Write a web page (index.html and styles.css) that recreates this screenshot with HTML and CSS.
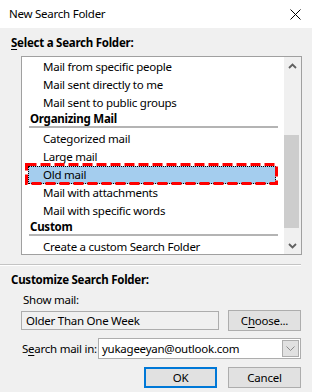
FILE: index.html
```html
<!DOCTYPE html>
<html lang="en">
<head>
    <meta charset="UTF-8">
    <title>New Search Folder</title>
    <link rel="stylesheet" href="styles.css">
</head>
<body>
    <div class="dialog">
        <div class="titlebar">
            <span class="title">New Search Folder</span>
            <svg class="close" width="11" height="11" viewBox="0 0 11 11"><path d="M0.5 0.5 L10.5 10.5 M10.5 0.5 L0.5 10.5" stroke="#000" stroke-width="1" fill="none"/></svg>
        </div>

        <div class="content">
            <div class="section-label"><u>S</u>elect a Search Folder:</div>

            <div class="listbox">
                <ul class="list">
                    <li class="item">Mail from specific people</li>
                    <li class="item">Mail sent directly to me</li>
                    <li class="item">Mail sent to public groups</li>
                    <li class="group">Organizing Mail</li>
                    <li class="item">Categorized mail</li>
                    <li class="item">Large mail</li>
                    <li class="item selected">Old mail
                        <svg class="mark" width="253" height="22" viewBox="0 0 253 22"><rect x="1.5" y="1.5" width="250" height="19" fill="none" stroke="#f00" stroke-width="3" stroke-dasharray="10 4"/></svg>
                    </li>
                    <li class="item">Mail with attachments</li>
                    <li class="item">Mail with specific words</li>
                    <li class="group">Custom</li>
                    <li class="item">Create a custom Search Folder</li>
                </ul>
                <div class="scrollbar">
                    <div class="arrow"><svg width="9" height="6" viewBox="0 0 9 6"><path d="M1 5 L4.5 1.5 L8 5" stroke="#606060" stroke-width="1.8" fill="none"/></svg></div>
                    <div class="track"><div class="thumb"></div></div>
                    <div class="arrow"><svg width="9" height="6" viewBox="0 0 9 6"><path d="M1 1 L4.5 4.5 L8 1" stroke="#606060" stroke-width="1.8" fill="none"/></svg></div>
                </div>
            </div>

            <div class="divider"></div>

            <div class="section-label customize">Customize Search Folder:</div>
            <div class="field-label">Show mail:</div>
            <div class="show-row">
                <div class="textbox">Older Than One Week</div>
                <button type="button" class="btn">C<u>h</u>oose...</button>
            </div>

            <div class="search-row">
                <span class="field-label inline">S<u>e</u>arch mail in:</span>
                <div class="combo">
                    <span class="combo-value">yukageeyan@outlook.com</span>
                    <span class="combo-drop"><svg width="9" height="5" viewBox="0 0 9 5"><path d="M0.5 0.5 L4.5 4.5 L8.5 0.5" stroke="#8a8a8a" stroke-width="1" fill="none"/></svg></span>
                </div>
            </div>

            <div class="button-group">
                <button type="button" class="btn default">OK</button>
                <button type="button" class="btn">Cancel</button>
            </div>
        </div>
    </div>
</body>
</html>
```

FILE: styles.css
```css
body {
    margin: 0;
    background-color: #f0f0f0;
    font-family: 'Noto Sans', 'Open Sans', sans-serif;
    font-size: 11.5px;
    letter-spacing: -0.25px;
    color: #000;
}

.dialog { width: 312px; height: 392px; overflow: hidden; }

.titlebar {
    height: 28px; background-color: #fff;
    display: flex; align-items: center; justify-content: space-between;
    padding: 0 11px 0 9px; box-sizing: border-box;
}
.title { line-height: 16px; }
.close { display: block; margin-top: 1px; }

.content { padding: 0 11px 0 0; }

.section-label {
    font-weight: 700; line-height: 16px;
    padding-left: 11px; margin-top: 7px;
}
.section-label u, .field-label u, .btn u { text-decoration-thickness: 1px; text-underline-offset: 2px; }

/* Список папок */
.listbox {
    margin: 5px -1px 0 21px; height: 199px;
    border: 1px solid #a0a0a0; background-color: #fff;
    box-sizing: border-box; display: flex; overflow: hidden;
}
.list { list-style: none; margin: 0; padding: 1px 0 0; flex: 1; }
.list li { white-space: nowrap; }
.item {
    height: 18px; line-height: 18px;
    margin: 0 8px 0 6px; padding-left: 15px;
}
.item.selected {
    position: relative; background-color: #a4cdee;
    outline: 1px dotted #000; outline-offset: -1px;
}
.item .mark { position: absolute; left: -3px; top: -3px; }
.group {
    font-weight: 700; line-height: 14px;
    padding-left: 8px; margin-bottom: 2px;
}
.group::after {
    content: ""; display: block; height: 2px;
    margin: 0 6px 0 -1px; background-color: #b4b4b4;
}

.scrollbar {
    width: 17px; background-color: #f0f0f0;
    display: flex; flex-direction: column;
}
.scrollbar .arrow { height: 17px; display: flex; align-items: center; justify-content: center; }
.scrollbar .track { flex: 1; }
.scrollbar .thumb { margin: 61px 2px 0 0; height: 93px; background-color: #cdcdcd; }

/* Нижняя часть */
.divider {
    margin-top: 9px; height: 1px;
    background-color: #c4c4c4; border-bottom: 1px solid #fff;
}
.section-label.customize { margin-top: 6px; }

.field-label { line-height: 16px; padding-left: 23px; margin-top: 4px; }
.field-label.inline { margin: 0; padding-left: 22px; white-space: nowrap; }

.show-row { display: flex; align-items: center; margin-top: 2px; height: 21px; }
.textbox {
    margin-left: 21px; width: 198px; height: 19px; line-height: 17px;
    border: 1px solid #adadad; box-sizing: border-box; padding-left: 4px;
}

.btn {
    width: 73px; height: 21px; padding: 0;
    font: inherit; letter-spacing: inherit; color: #000;
    background-color: #e1e1e1; border: 1px solid #adadad;
    box-sizing: border-box; line-height: 18px;
}
.show-row .btn { margin-left: auto; }
.btn.default { border: 2px solid #0078d7; line-height: 16px; }

.search-row { display: flex; align-items: center; margin-top: 7px; }
.combo {
    margin-left: auto; width: 203px; height: 21px;
    border: 1px solid #adadad; background-color: #fff;
    box-sizing: border-box; display: flex; align-items: center;
}
.combo-value { flex: 1; padding-left: 3px; line-height: 18px; }
.combo-drop {
    width: 17px; height: 17px; margin-right: 1px;
    background-color: #e1e1e1; border: 1px solid #adadad; box-sizing: border-box;
    display: flex; align-items: center; justify-content: center;
}

.button-group { display: flex; justify-content: flex-end; gap: 11px; margin-top: 8px; }
```
